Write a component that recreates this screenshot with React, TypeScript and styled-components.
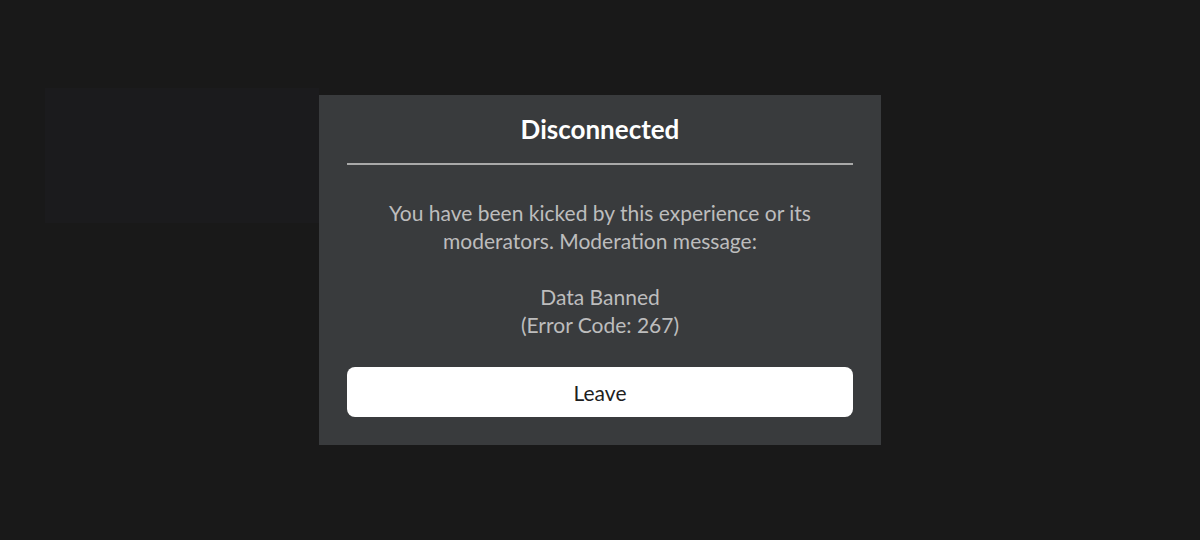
import styled, { createGlobalStyle } from 'styled-components';

const GlobalStyle = createGlobalStyle`
	html, body {
		margin: 0;
		padding: 0;
		background: #191919;
	}
	body {
		font-family: Lato, "Liberation Sans", sans-serif;
	}
`;

const Screen = styled.div`
	position: relative;
	width: 1200px;
	height: 540px;
	overflow: hidden;
	display: flex;
	justify-content: center;
	align-items: flex-start;
	padding-top: 95px;
	box-sizing: border-box;
`;

// the faint panel left behind the dialog
const GhostPanel = styled.div`
	position: absolute;
	left: 45px;
	top: 88px;
	width: 274px;
	height: 135px;
	background: #1b1b1d;
`;

const Dialog = styled.section`
	position: relative;
	width: 562px;
	background: #393b3d;
	padding: 0 28px 28px;
	box-sizing: border-box;
	display: flex;
	flex-direction: column;
`;

const Title = styled.h2`
	margin: 0;
	height: 68px;
	display: flex;
	align-items: center;
	justify-content: center;
	color: #ffffff;
	font-size: 26px;
	font-weight: 700;
	border-bottom: 2px solid #a9a9a9;
`;

const Message = styled.p`
	margin: 34px 0 28px;
	color: #bdbdbd;
	font-size: 21px;
	line-height: 28px;
	text-align: center;
	white-space: pre-line;
`;

const Button = styled.button`
	height: 50px;
	border: none;
	border-radius: 8px;
	background: #ffffff;
	color: #1e1e1e;
	font-family: inherit;
	font-size: 21px;
	cursor: pointer;
`;

function App() {
	return (
		<>
			<GlobalStyle />
			<Screen>
				<GhostPanel />
				<Dialog>
					<Title>Disconnected</Title>
					<Message>
						{'You have been kicked by this experience or its\nmoderators. Moderation message:\n\nData Banned\n(Error Code: 267)'}
					</Message>
					<Button>Leave</Button>
				</Dialog>
			</Screen>
		</>
	);
}

export default App;
